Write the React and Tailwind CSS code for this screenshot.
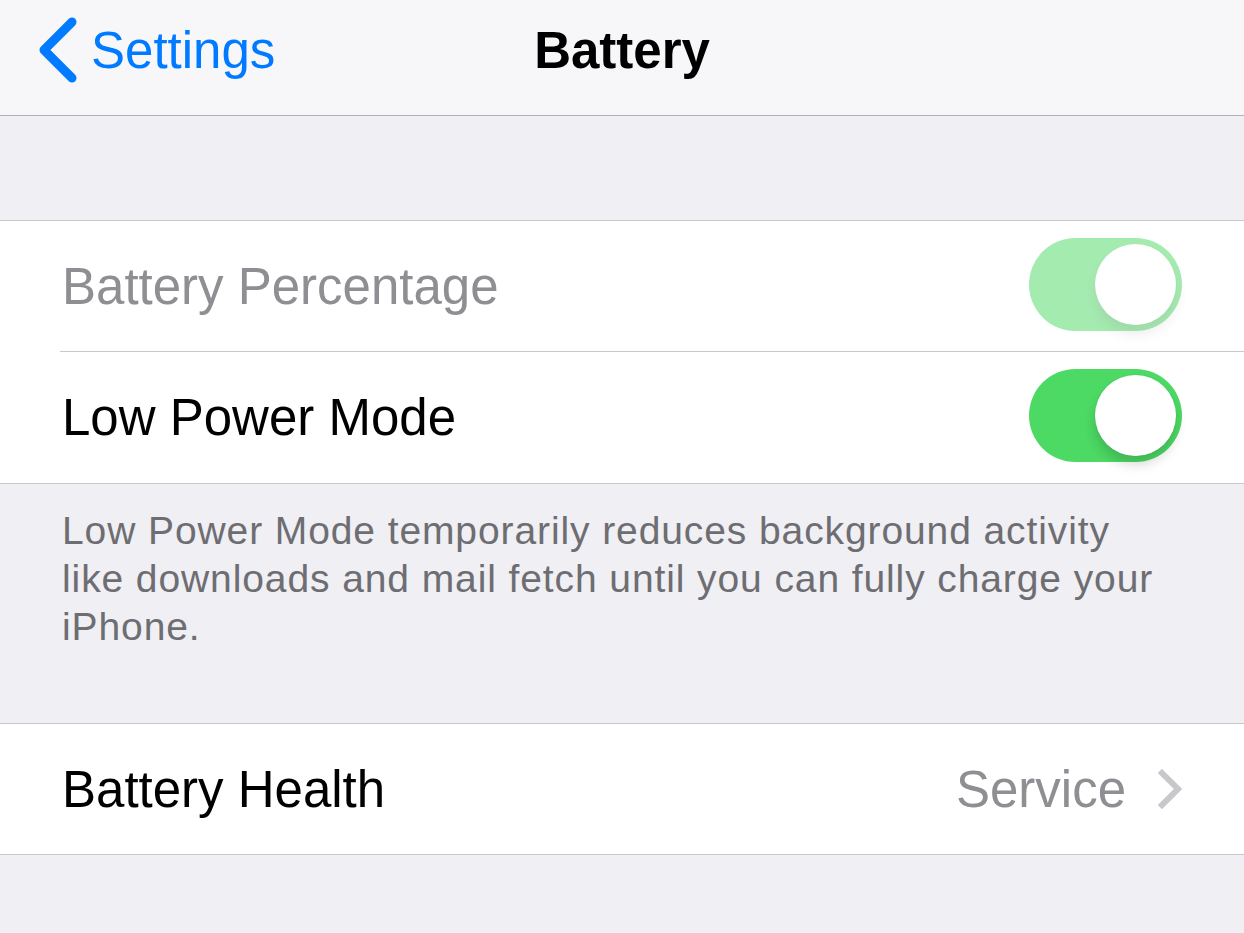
import React from 'react';

const Toggle = ({ on = true, disabled = false }) => (
  <div
    className={`relative w-[153px] h-[93px] rounded-full -mt-[4px] ${on ? 'bg-[#4cd964]' : 'bg-[#e5e5ea]'} ${disabled ? 'opacity-50' : ''}`}
  >
    <div className="absolute top-[6px] right-[6px] w-[81px] h-[81px] rounded-full bg-white shadow-[0_9px_12px_rgba(0,0,0,0.15),0_0_2px_rgba(0,0,0,0.08)]" />
  </div>
);

const Row = ({ children, right, divider, tall = true }) => (
  <div className={`relative flex items-center justify-between ${tall ? 'h-[131px]' : 'h-[130px]'} pl-[62px] pr-[62px]`}>
    {children}
    {right}
    {divider && <div className="absolute left-[60px] right-0 bottom-0 h-px bg-[#c8c7cc]" />}
  </div>
);

const App = () => {
  return (
    <div className="w-[1244px] h-[933px] overflow-hidden bg-[#efeff4] font-['Liberation_Sans',Arial,sans-serif]">
      {/* navigation bar */}
      <div className="relative h-[116px] bg-[#f7f7f9] border-b border-[#b2b2b2]">
        <div className="flex items-center h-[100px]">
          <div className="flex items-center pl-[38px] gap-[13px] text-[#007aff]">
            <svg width="40" height="66" viewBox="0 0 40 66" fill="none">
              <polyline
                points="34,5 6,33 34,61"
                stroke="#007aff"
                strokeWidth="9"
                strokeLinecap="round"
                strokeLinejoin="round"
              />
            </svg>
            <span className="text-[51px] leading-none">Settings</span>
          </div>
        </div>
        <div className="absolute inset-x-0 top-0 h-[100px] flex items-center justify-center pointer-events-none">
          <span className="text-[51px] leading-none font-bold text-black">Battery</span>
        </div>
      </div>

      <div className="h-[104px]" />

      <div className="bg-white border-y border-[#c8c7cc]">
        <Row right={<Toggle on disabled />} divider>
          <span className="text-[51px] leading-none text-[#8e8e93]">Battery Percentage</span>
        </Row>
        <Row right={<Toggle on />}>
          <span className="text-[51px] leading-none text-black">Low Power Mode</span>
        </Row>
      </div>

      <p className="px-[62px] pt-[23px] pb-[72px] text-[39px] leading-[48px] tracking-[0.9px] text-[#6d6d72]">
        Low Power Mode temporarily reduces background activity like downloads and mail fetch until you can fully charge your iPhone.
      </p>

      <div className="bg-white border-y border-[#c8c7cc]">
        <Row
          tall={false}
          right={
            <div className="flex items-center gap-[32px]">
              <span className="text-[51px] leading-none text-[#8e8e93]">Service</span>
              <svg width="24" height="40" viewBox="0 0 24 40" fill="none">
                <polyline points="4,4 20,20 4,36" stroke="#c7c7cc" strokeWidth="6" strokeLinecap="square" />
              </svg>
            </div>
          }
        >
          <span className="text-[51px] leading-none text-black">Battery Health</span>
        </Row>
      </div>
    </div>
  );
};

export default App;
